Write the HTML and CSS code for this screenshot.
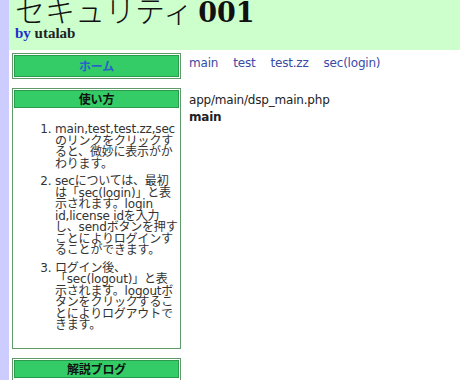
FILE: index.html
```html
<!DOCTYPE html>
<html lang="ja">
<head>
<meta charset="utf-8">
<title>セキュリティ001</title>
<link rel="stylesheet" href="styles.css">
</head>
<body>
<div class="page">
  <header class="header">
    <h1 class="title"><span class="title-ja">セキュリティ</span><span class="title-num">001</span></h1>
    <p class="byline"><span class="by">by</span> utalab</p>
  </header>
  <div class="layout">
    <aside class="sidebar">
      <div class="box box-home">
        <div class="box-head box-head-home"><a class="home-link" href="#">ホーム</a></div>
      </div>
      <div class="box">
        <div class="box-head">使い方</div>
        <ol class="usage">
          <li>main,test,test.zz,secのリンクをクリックすると、微妙に表示がかわります。</li>
          <li>secについては、最初は「sec(login)」と表示されます。login id,license idを入力し、sendボタンを押すことによりログインすることができます。</li>
          <li>ログイン後、「sec(logout)」と表示されます。logoutボタンをクリックすることによりログアウトできます。</li>
        </ol>
      </div>
      <div class="box">
        <div class="box-head">解説ブログ</div>
        <p class="blog">utalab blog</p>
      </div>
    </aside>
    <main class="main">
      <nav class="nav">
        <a href="#">main</a>
        <a href="#">test</a>
        <a href="#">test.zz</a>
        <a href="#">sec(login)</a>
      </nav>
      <p class="path">app/main/dsp_main.php</p>
      <p class="heading">main</p>
    </main>
  </div>
</div>
</body>
</html>
```

FILE: styles.css
```css
html, body {
  margin: 0;
  padding: 0;
}

body {
  background: #ccccff;
  font-family: "DejaVu Sans", "Noto Sans CJK JP", sans-serif;
  font-size: 12px;
  letter-spacing: -0.2px;
  color: #222;
}

.page {
  margin-left: 9px;
  background: #ffffff;
  min-height: 380px;
  overflow: hidden;
}

.header {
  background: #ccffcc;
  height: 50px;
  padding-left: 6px;
  overflow: hidden;
}

.title {
  margin: -6px 0 0 0;
  font-size: 30px;
  line-height: 30px;
  height: 30px;
  color: #111;
  letter-spacing: 0;
  white-space: nowrap;
}

.title-ja {
  font-family: "Noto Sans CJK JP", sans-serif;
  font-weight: 300;
}

.title-num {
  font-family: "DejaVu Serif", serif;
  font-weight: bold;
  font-size: 27px;
  margin-left: 5px;
}

.byline {
  margin: 1px 0 0 0;
  font-family: "Liberation Serif", serif;
  font-weight: bold;
  font-size: 15px;
  line-height: 16px;
  letter-spacing: 0;
  color: #222;
}

.by {
  color: #1a2fd0;
}

.layout {
  display: flex;
  align-items: flex-start;
}

.sidebar {
  width: 169px;
  margin-left: 3px;
  padding-top: 3px;
  flex-shrink: 0;
}

.box {
  border: 1px solid #5f9a6a;
  padding: 1px;
  margin-bottom: 9px;
  background: #ffffff;
}

.box-head {
  background: #33cc66;
  border: 1px solid #2a9a4c;
  text-align: center;
  font-family: "Noto Sans CJK JP", sans-serif;
  font-weight: bold;
  font-size: 12px;
  line-height: 16px;
  color: #111;
}

.box-head-home {
  line-height: 20px;
}

.home-link {
  color: #2a62c8;
  text-decoration: none;
}

.usage {
  margin: 16px 0 15px 0;
  padding: 0 1px 0 41px;
  line-height: 11.5px;
  color: #333;
}

.usage li + li {
  margin-top: 6px;
}

.blog {
  margin: 10px 0 10px 12px;
}

.main {
  margin-left: 8px;
  padding-top: 3px;
}

.nav {
  display: flex;
  gap: 15px;
  margin-top: 3px;
  line-height: 14px;
}

.nav a {
  color: #3a4aa6;
  text-decoration: none;
}

.path {
  margin: 23px 0 0 0;
  line-height: 14px;
  color: #222;
}

.heading {
  margin: 3px 0 0 0;
  line-height: 14px;
  font-weight: bold;
  color: #222;
}
```
